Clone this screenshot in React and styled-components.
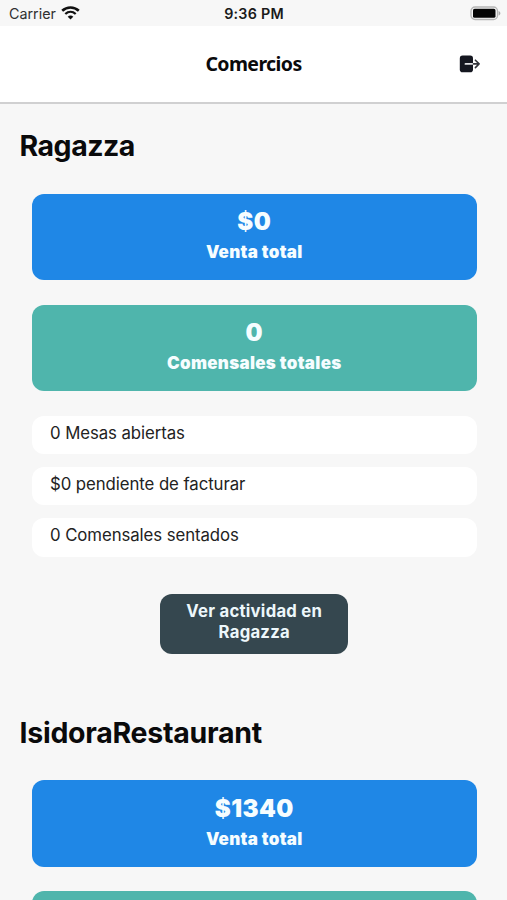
import React from "react";
import styled, { createGlobalStyle } from "styled-components";

const GlobalStyle = createGlobalStyle`
  *{
    box-sizing: border-box;
  }
  html, body{
    margin: 0;
    height: 100%;
    overflow: hidden;
    background-color: #f7f7f7;
  }
  body{
    font-family: Inter, "Liberation Sans", sans-serif;
    color: #0a0a0b;
  }
  h1, h2, p{
    margin: 0;
  }
`;

const Screen = styled.div`
  display: flex;
  flex-direction: column;
  height: 900px;
  overflow: hidden;
`;

const StatusBar = styled.div`
  display: grid;
  grid-template-columns: 1fr auto 1fr;
  align-items: center;
  flex: none;
  height: 26px;
  padding: 1px 6px 0 9px;
  font-size: 14.3px;
  line-height: 26px;
`;

const Carrier = styled.div`
  display: flex;
  align-items: center;
  gap: 5.5px;
  color: #303030;
  letter-spacing: 0;

  svg{
    margin-top: -2px;
  }
`;

const Clock = styled.div`
  margin-left: -2px;
  font-weight: 600;
  letter-spacing: 0.25px;
  color: #1a1a1a;
`;

const BatterySlot = styled.div`
  display: flex;
  justify-content: flex-end;
  margin-top: -2px;
`;

const Header = styled.header`
  display: grid;
  grid-template-columns: 1fr auto 1fr;
  align-items: center;
  flex: none;
  height: 78px;
  padding: 0 26px;
  background-color: #fff;
  border-bottom: 2px solid #d0d0d1;

  h1{
    grid-column: 2;
    font-family: "Noto Sans", sans-serif;
    font-size: 19.5px;
    font-weight: 700;
    line-height: 26px;
    letter-spacing: -0.6px;
  }
`;

const LogoutButton = styled.button`
  display: flex;
  justify-self: end;
  padding: 0;
  border: 0;
  background: none;
`;

const Business = styled.section`
  flex: none;
  height: 586.7px;
  padding: 25px 30px 0 31.5px;

  h2{
    margin-left: -12px;
    font-size: 28.5px;
    font-weight: 700;
    line-height: 34px;
    letter-spacing: ${(props) => props.$tracking};
    white-space: nowrap;
  }
`;

const Cards = styled.div`
  display: flex;
  flex-direction: column;
  gap: 24.5px;
  margin-top: 30.5px;
`;

const Card = styled.div`
  height: 86.5px;
  padding-top: 12.5px;
  border-radius: 12px;
  background-color: ${(props) => props.$color};
  color: #f6fdff;
  text-align: center;
`;

const Amount = styled.p`
  font-size: 24px;
  font-weight: 900;
  line-height: 32px;
  letter-spacing: 0.4px;
`;

const CardLabel = styled.p`
  font-size: 17px;
  font-weight: 900;
  line-height: 28px;
  letter-spacing: 0.3px;
`;

const Details = styled.div`
  display: flex;
  flex-direction: column;
  gap: 12.5px;
  margin-top: 24.5px;
`;

const Detail = styled.p`
  height: 38.7px;
  padding: 5px 18.5px;
  border-radius: 12px;
  background-color: #fff;
  font-size: 16.8px;
  line-height: 24px;
  letter-spacing: -0.08px;
  color: #222;
`;

const ActivityButton = styled.button`
  display: block;
  width: 188px;
  height: 60px;
  margin: 37.5px auto 0;
  padding: 7px 20px 11px;
  border: 0;
  border-radius: 12px;
  background-color: #35474f;
  color: #edf7fb;
  font-family: inherit;
  font-size: 16.7px;
  font-weight: 700;
  line-height: 21px;
  letter-spacing: 0.25px;
`;

function WifiIcon() {
    return (
        <svg width="19" height="14" viewBox="0 0 19 14" fill="none">
            <path d="M1.2 4.8C6 .3 13 .3 17.8 4.8" stroke="#111" strokeWidth="2.6" />
            <path d="M4.3 8C7.4 5.2 11.6 5.2 14.7 8" stroke="#111" strokeWidth="2.3" />
            <path d="M6.7 10.7C8.3 9 10.7 9 12.3 10.7L9.5 13.5Z" fill="#111" />
        </svg>
    );
}

function BatteryIcon() {
    return (
        <svg width="31" height="15" viewBox="0 0 31 15">
            <rect x="1" y="1" width="26.5" height="12.5" rx="4" fill="#f7f7f7" stroke="#b5b5b5" strokeWidth="1.3" />
            <rect x="3" y="2.8" width="22.5" height="9" rx="1.6" fill="#050505" />
            <path d="M28.6 5v4.6c2.4-1 2.4-3.6 0-4.6Z" fill="#aaa" />
        </svg>
    );
}

function LogoutIcon() {
    return (
        <svg width="22" height="18" viewBox="0 0 22 18" fill="none">
            <rect x="0.8" y="0.6" width="13.2" height="16.6" rx="2.8" fill="#151720" />
            <path d="M6.5 8.9h7.5" stroke="#e4e4e7" strokeWidth="1.9" strokeLinecap="round" />
            <path d="M14.5 8.9h5.4M16.4 5.2l3.7 3.7-3.7 3.7" stroke="#33353b" strokeWidth="1.6" strokeLinecap="round" strokeLinejoin="round" />
        </svg>
    );
}

const businesses = [
    { name: "Ragazza", sales: "$0", guests: "0", tables: "0", pending: "$0", seated: "0", tracking: "-0.5px" },
    { name: "IsidoraRestaurant", sales: "$1340", tracking: "-0.27px" },
];

export default function App() {
    return (
        <>
            <GlobalStyle />
            <Screen>
                <StatusBar>
                    <Carrier>
                        Carrier
                        <WifiIcon />
                    </Carrier>
                    <Clock>9:36 PM</Clock>
                    <BatterySlot>
                        <BatteryIcon />
                    </BatterySlot>
                </StatusBar>
                <Header>
                    <h1>Comercios</h1>
                    <LogoutButton aria-label="Salir">
                        <LogoutIcon />
                    </LogoutButton>
                </Header>
                {businesses.map((item) => (
                    <Business key={item.name} $tracking={item.tracking}>
                        <h2>{item.name}</h2>
                        <Cards>
                            <Card $color="#1f87e6">
                                <Amount>{item.sales}</Amount>
                                <CardLabel>Venta total</CardLabel>
                            </Card>
                            <Card $color="#4fb5ac">
                                {item.guests && <Amount>{item.guests}</Amount>}
                                {item.guests && <CardLabel>Comensales totales</CardLabel>}
                            </Card>
                        </Cards>
                        {item.tables && (
                            <>
                                <Details>
                                    <Detail>{item.tables} Mesas abiertas</Detail>
                                    <Detail>{item.pending} pendiente de facturar</Detail>
                                    <Detail>{item.seated} Comensales sentados</Detail>
                                </Details>
                                <ActivityButton>Ver actividad en {item.name}</ActivityButton>
                            </>
                        )}
                    </Business>
                ))}
            </Screen>
        </>
    );
}
